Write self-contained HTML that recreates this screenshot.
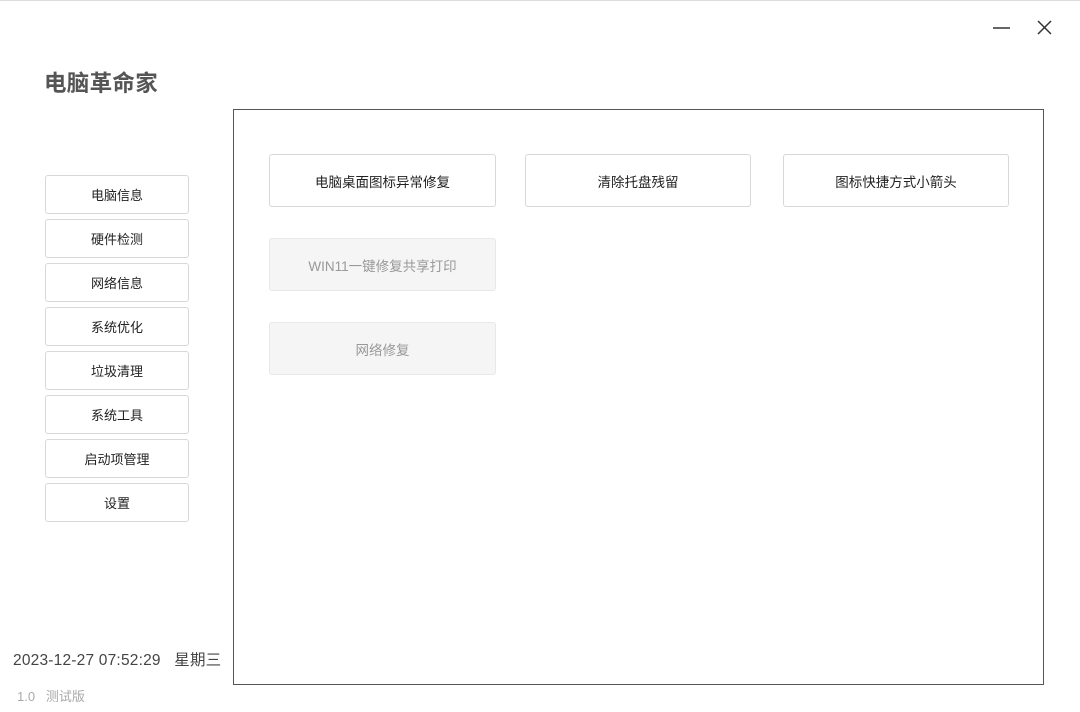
<!DOCTYPE html>
<html><head><meta charset="utf-8"><style>
*{margin:0;padding:0;box-sizing:border-box}
body{width:1080px;height:712px;background:#fff;position:relative;overflow:hidden;font-family:"Liberation Sans","Noto Sans CJK SC",sans-serif;color:#333}
.topline{position:absolute;left:0;top:0;width:1080px;height:1px;background:#ddd}
.title{position:absolute;left:44px;top:66px;font-size:22.5px;font-weight:bold;color:#555;letter-spacing:0.3px}
.nav{position:absolute;left:45px;width:144px;height:39px;border:1px solid #d8d8d8;border-radius:3px;font-size:13px;display:flex;align-items:center;justify-content:center;color:#222}
.main{position:absolute;left:233px;top:109px;width:811px;height:576px;border:1px solid #555}
.btn{position:absolute;width:227px;height:53px;border:1px solid #d8d8d8;border-radius:3px;font-size:13.5px;display:flex;align-items:center;justify-content:center;color:#222}
.dis{background:#f5f5f5;color:#999;border-color:#e8e8e8}
.date{position:absolute;left:13px;top:648px;font-size:15.5px;color:#444;letter-spacing:0.2px}
.ver{position:absolute;left:17px;top:686px;font-size:13px;color:#aaa}
</style></head><body>
<div class="topline"></div>
<svg style="position:absolute;left:990px;top:18px" width="70" height="22">
<line x1="3" y1="10" x2="20" y2="10" stroke="#333" stroke-width="1.5"/>
<line x1="48" y1="3" x2="61" y2="16" stroke="#333" stroke-width="1.5"/>
<line x1="61" y1="3" x2="48" y2="16" stroke="#333" stroke-width="1.5"/>
</svg>
<div class="title">电脑革命家</div>
<div class="nav" style="top:175px">电脑信息</div>
<div class="nav" style="top:219px">硬件检测</div>
<div class="nav" style="top:263px">网络信息</div>
<div class="nav" style="top:307px">系统优化</div>
<div class="nav" style="top:351px">垃圾清理</div>
<div class="nav" style="top:395px">系统工具</div>
<div class="nav" style="top:439px">启动项管理</div>
<div class="nav" style="top:483px">设置</div>
<div class="main"></div>
<div class="btn" style="left:269px;top:154px">电脑桌面图标异常修复</div>
<div class="btn" style="left:525px;top:154px;width:226px">清除托盘残留</div>
<div class="btn" style="left:783px;top:154px;width:226px">图标快捷方式小箭头</div>
<div class="btn dis" style="left:269px;top:238px">WIN11一键修复共享打印</div>
<div class="btn dis" style="left:269px;top:322px">网络修复</div>
<div class="date">2023-12-27 07:52:29&nbsp;&nbsp; 星期三</div>
<div class="ver">1.0&nbsp;&nbsp; 测试版</div>
</body></html>
